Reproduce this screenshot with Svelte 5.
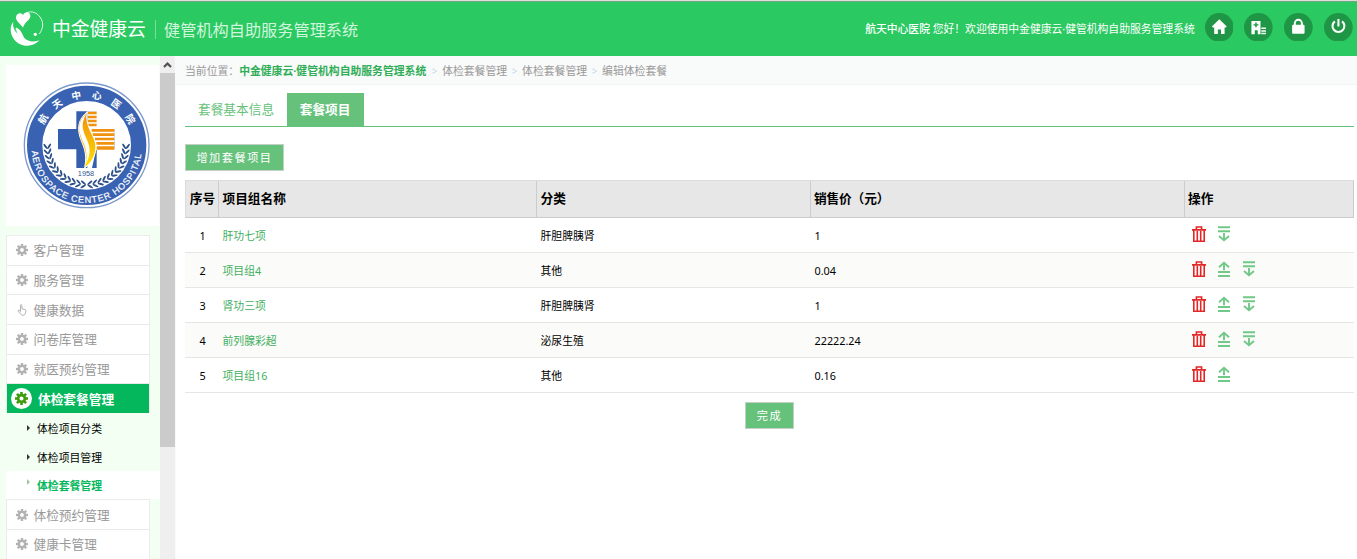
<script>
  const menu = ['客户管理', '服务管理', '健康数据', '问卷库管理', '就医预约管理'];
  const subs = ['体检项目分类', '体检项目管理', '体检套餐管理'];
  const more = ['体检预约管理', '健康卡管理'];
  const rows = [
    ['肝功七项', '肝胆脾胰肾', '1'],
    ['项目组4', '其他', '0.04'],
    ['肾功三项', '肝胆脾胰肾', '1'],
    ['前列腺彩超', '泌尿生殖', '22222.24'],
    ['项目组16', '其他', '0.16']
  ];
  const ring = [...'航天中心医院'].map((c, i) => ({ c, a: -59 + i * 23.6 }));
  const teeth = [0, 45, 90, 135, 180, 225, 270, 315];
  const leaves = Array.from({ length: 12 }, (_, i) => {
    const t = ((178 - i * 7.6) * Math.PI) / 180;
    return { x: 118 * Math.cos(t), y: 118 * Math.sin(t), r: 88 - i * 7.6 };
  });
</script>

{#snippet gear()}
  <svg class="ico" viewBox="0 0 12 12">
    {#each teeth as a}
      <rect x="4.8" y="0" width="2.4" height="3" transform="rotate({a} 6 6)" fill="currentColor" />
    {/each}
    <circle cx="6" cy="6" r="3.1" fill="none" stroke="currentColor" stroke-width="2.4" />
  </svg>
{/snippet}

{#snippet hand()}
  <svg class="ico" viewBox="0 0 12 12" fill="none" stroke="currentColor" stroke-width="1">
    <path d="M4.5 7.5V1.4q0-.8.7-.8t.7.8v3.4l3.2.8q1 .3.8 1.4l-.6 2.6q-.4 1.6-2 1.6H5.8L2.2 7.3q-.5-1.1.5-1.2z" />
  </svg>
{/snippet}

<div class="page">
  <header>
    <svg class="brand" viewBox="0 0 102 108">
      <path d="M39 50C32 38 17 32 18 18 20 6 33 3 39 12 44 2 57 1 61 12c3 14-17 19-22 38z" fill="#fff" />
      <path d="M50 5C66-1 80 5 90 18c11 15 11 32-2 51" fill="none" stroke="#fff" stroke-width="2.6" />
      <circle cx="76" cy="70" r="5" fill="#fff" />
      <path d="M10 32C-1 46 0 65 9 80c10 19 33 27 53 23 12-3 20-8 27-16-18 8-36 4-46-6l-8-16c-5-9-8-10-14-14-3-2-5 1-4 4l6 13C13 60 7 48 10 32z" fill="#fff" />
    </svg>
    <span class="name">中金健康云</span>
    <i class="bar"></i>
    <span class="sys">健管机构自助服务管理系统</span>
    <span class="hello"><b>航天中心医院</b> 您好！欢迎使用中金健康云·健管机构自助服务管理系统</span>
    <nav>
      <svg viewBox="0 0 29 29"><circle cx="14.5" cy="14.5" r="14.5" /><path d="M14.5 6.3L22 13.6l-1 1.1h-1.2v6.6h-3.6v-4.6h-3.2v4.6H9.3v-6.6H8l-1-1.1z" fill="#fff" /></svg>
      <svg viewBox="0 0 29 29"><circle cx="14.5" cy="14.5" r="14.5" /><path d="M7.5 8h9.2v13.5h-2.8v-4h-3v4H7.5z" fill="#fff" /><path d="M12.1 9.5v5M9.6 12h5" stroke="#1f9645" stroke-width="1.5" /><path d="M17.5 15.5h4.7M17.5 18.2h4.7M17.5 20.8h4.7" stroke="#fff" stroke-width="1.5" /></svg>
      <svg viewBox="0 0 29 29"><circle cx="14.5" cy="14.5" r="14.5" /><path d="M10.9 12.5v-2a3.6 3.6 0 017.2 0v2" fill="none" stroke="#fff" stroke-width="2" /><rect x="8.2" y="12" width="12.6" height="9" rx="1" fill="#fff" /></svg>
      <svg viewBox="0 0 29 29"><circle cx="14.5" cy="14.5" r="14.5" /><path d="M11 8.4a6 6 0 107.2 0M14.6 6v7.7" fill="none" stroke="#fff" stroke-width="2.1" /></svg>
    </nav>
  </header>

  <div class="body">
    <aside>
      <div class="logo">
        <svg viewBox="18 27 459 483">
          <defs>
            <path id="arc" d="M95 276A165 165 0 0 0 425 276" />
            <linearGradient id="flame" x1="0" y1="0" x2="0" y2="1"><stop offset="0" stop-color="#f08a08" /><stop offset="1" stop-color="#ffe300" /></linearGradient>
          </defs>
          <circle cx="260" cy="268" r="187" fill="#fff" stroke="#7c99cc" stroke-width="4" />
          <circle cx="260" cy="268" r="156" fill="none" stroke="#3963b2" stroke-width="46" />
          <g fill="#fff" font-size="29" font-weight="700" text-anchor="middle">
            {#each ring as { c, a }}
              <text x="260" y="126" transform="rotate({a} 260 268)">{c}</text>
            {/each}
          </g>
          <text class="latin" fill="#fff" stroke="#fff" stroke-width=".6" font-size="27"><textPath href="#arc" startOffset="9" textLength="490" lengthAdjust="spacing">AEROSPACE CENTER HOSPITAL</textPath></text>
          <path d="M229 166h61v53h54v61h-54v56h-61v-56h-55v-61h55z" fill="#355fae" />
          <path d="M262 166h30v53h52v63h-56l-12 54h-14z" fill="#fff" />
          <g fill="#f0920e">
            <path d="M263 167h27v8h-27zM263 179h27v8h-27zM263 191h27v8h-27zM263 203h27v8h-27zM275 219h68v8h-68zM277 232h66v8h-66zM285 245h58v8h-58zM289 258h54v8h-54zM290 271h53v10h-53z" />
          </g>
          <path d="M262 167c-27 23-30 47-23 73 8 29 25 45 15 96 29-22 39-54 31-81-11-29-31-53-23-88z" fill="url(#flame)" stroke="#fff" stroke-width="3" />
          <path d="M260 171c-25 24-26 48-18 68 9 27 22 39 17 84 13-28 12-49 3-69-14-33-22-46-2-83z" fill="#fff" />
          <text class="latin" x="258" y="360" font-size="22" text-anchor="middle" fill="#35568d">1958</text>
          {#each [1, -1] as s}
            <g transform="translate(260 268) scale({s} 1)" fill="#2c5087">
              {#each leaves as l}
                <g transform="translate({l.x} {l.y}) rotate({l.r})">
                  <ellipse cx="-4" cy="-4" rx="9.5" ry="3" transform="rotate(35)" />
                  <ellipse cx="-4" cy="4" rx="9.5" ry="3" transform="rotate(-35)" />
                </g>
              {/each}
            </g>
          {/each}
        </svg>
      </div>
      <ul class="menu">
        {#each menu as m, i}
          <li>{#if i === 2}{@render hand()}{:else}{@render gear()}{/if}<span>{m}</span></li>
        {/each}
        <li class="active"><em>{@render gear()}</em><span>体检套餐管理</span></li>
      </ul>
      <ul class="subs">
        {#each subs as s, i}<li class:on={i === 2}><i></i>{s}</li>{/each}
      </ul>
      <ul class="menu second">
        {#each more as m}<li>{@render gear()}<span>{m}</span></li>{/each}
      </ul>
    </aside>

    <div class="scroll">
      <svg viewBox="0 0 15 17"><path d="M4 11l3.5-3.5L11 11" fill="none" stroke="#505050" stroke-width="2.2" /></svg>
      <div class="thumb"></div>
    </div>

    <main>
      <div class="crumbs">
        <span>当前位置：</span><b>中金健康云·健管机构自助服务管理系统</b><i>&gt;</i><span>体检套餐管理</span><i>&gt;</i><span>体检套餐管理</span><i>&gt;</i><span>编辑体检套餐</span>
      </div>
      <div class="tabs"><span>套餐基本信息</span><span class="cur">套餐项目</span></div>
      <button class="add">增加套餐项目</button>
      <div class="table">
        <div class="row head"><span>序号</span><span>项目组名称</span><span>分类</span><span>销售价（元）</span><span>操作</span></div>
        {#each rows as r, i}
          <div class="row" class:alt={i % 2 === 1}>
            <span>{i + 1}</span><span class="link">{r[0]}</span><span>{r[1]}</span><span>{r[2]}</span>
            <span class="ops">
              <svg viewBox="0 0 14 17" fill="none" stroke="#e32626" stroke-width="1.6"><path d="M0 3.9h14M4.4 3.5V1h5.2v2.5M1.8 3.5v11.8h10.4V3.5M5.3 5v9.8M8.7 5v9.8" /></svg>
              {#if i > 0}
                <svg viewBox="0 0 14 17" fill="none" stroke="#72c887" stroke-width="1.9"><path d="M2 6.3L7 1.8l5 4.5M7 2v7.3M1 11h12M1 15h12" /></svg>
              {/if}
              {#if i < 4}
                <svg viewBox="0 0 14 17" fill="none" stroke="#72c887" stroke-width="1.9"><path d="M1 1.2h12M1 5.2h12M7 7v7.5M2 10l5 4.3 5-4.3" /></svg>
              {/if}
            </span>
          </div>
        {/each}
      </div>
      <button class="done">完成</button>
    </main>
  </div>
</div>

<style>
  :global(body) { margin: 0; background: #fff; }
  * { box-sizing: border-box; }
  .page { height: 559px; overflow: hidden; display: flex; flex-direction: column; font-family: "Noto Sans", "Noto Sans CJK SC", sans-serif; font-size: 10.83px; line-height: 16px; color: #000; white-space: nowrap; }
  svg { display: block; flex: none; }
  ul { margin: 0; padding: 0; list-style: none; }
  header { height: 56px; flex: none; background: #2ac961; border-top: 1px solid #ddd; box-shadow: inset 0 1px #70a980; display: flex; align-items: center; color: #fff; padding: 0 4.5px 0 10px; }
  .brand { width: 34px; height: 36px; margin-top: 1px; }
  .name { font-size: 18.8px; line-height: 28px; margin-left: 8px; width: 94px; margin-top: 1px; }
  .bar { width: 1px; height: 19px; background: #7bde9d; margin: 1px 8px 0 9px; }
  .sys { font-size: 16.2px; line-height: 24px; color: #d2f5de; margin-top: 3px; }
  .hello { margin-left: auto; margin-right: 10px; letter-spacing: -0.03px; }
  .hello b { font-weight: 500; }
  nav { display: flex; gap: 11px; margin-top: -3px; }
  nav svg { width: 28.7px; height: 28.7px; fill: #1f9645; }
  .body { flex: 1; min-height: 0; display: flex; }
  aside { width: 160px; background: #f3fff3; flex: none; overflow: hidden; padding: 9px 0 0 6px; }
  .logo { width: 153px; height: 161px; background: #fff; }
  .logo svg { width: 153px; height: 161px; }
  .latin { font-family: "Liberation Sans", sans-serif; }
  .menu { width: 144px; margin-top: 9px; border: 1px solid #ececec; border-bottom: 0; font-size: 12.7px; color: #999; }
  .menu li { height: 29.7px; background: #fff; border-bottom: 1px solid #e9e9e9; display: flex; align-items: center; padding-left: 8.5px; }
  .menu li span { margin-left: 6px; }
  .ico { width: 12px; height: 12px; color: #b2b2b2; }
  .menu .active { height: 29px; background: #04b75c; color: #fff; font-weight: 700; padding-left: 4px; border: 0; }
  .active em { width: 21px; height: 21px; border-radius: 50%; background: #fff; display: grid; place-items: center; }
  .active .ico { color: #3f9c0c; width: 13px; height: 13px; }
  .subs li { height: 29px; display: flex; align-items: center; padding: 2px 0 0 21px; }
  .subs i { border-left: 3px solid #333; border-top: 3px solid transparent; border-bottom: 3px solid transparent; margin-right: 7px; margin-top: -2px; }
  .subs .on { background: #fff; color: #04b75c; font-weight: 700; height: 28px; padding-top: 2px; }
  .subs .on i { border-left-color: #9cc99c; margin-top: -8px; }
  .second { margin-top: 0; }
  .scroll { width: 16px; background: #efefef; border-right: 1px solid #fafafa; flex: none; }
  .scroll svg { width: 15px; height: 17px; }
  .thumb { height: 374px; width: 15px; background: #cbcbcb; }
  main { flex: 1; display: flex; flex-direction: column; align-items: flex-start; }
  .crumbs { width: 100%; height: 29px; flex: none; background: #f9fafa; border-bottom: 1px solid #f0f4f4; display: flex; align-items: center; padding: 1px 0 0 9px; color: #999; }
  .crumbs b { color: #2fae57; width: 188px; }
  .crumbs i { width: 15px; text-align: center; font-style: normal; color: #c5dbea; font-size: 10px; }
  .tabs { width: 1169px; height: 34px; margin: 8px 0 0 9px; border-bottom: 1px solid #66c17b; display: flex; font-size: 12.7px; line-height: 33px; color: #66c17b; padding-left: 13px; }
  .tabs .cur { margin-left: 12.5px; background: #66c17b; color: #fff; font-weight: 700; width: 77px; text-align: center; }
  button { font: inherit; color: #fff; background: #66c17b; border: 1px solid #c4cfc7; padding: 0; letter-spacing: 1.5px; height: 27px; font-size: 11.2px; text-indent: 0; }
  .add { width: 99px; margin: 17px 0 0 9px; }
  .done { width: 49px; margin: 9px 0 0 569px; }
  .table { width: 1169px; margin: 9px 0 0 9px; }
  .row { display: grid; grid-template-columns: 34px 318px 274px 374px 169px; height: 35px; border-bottom: 1px solid #e6e6e6; align-items: center; }
  .row > span { padding: 2px 0 0 3.5px; }
  .row > span:first-child { text-align: center; padding: 2px 0 0 1px; }
  .alt { background: #fbfbf9; }
  .head { height: 38px; background: #e7e7e7; border: 1px solid #ccc; border-top-color: #dcdcdc; border-left-color: #dcdcdc; grid-template-columns: 33px 318px 274px 374px 168px; font-size: 12.7px; font-weight: 700; }
  .row.head > span { height: 36px; line-height: 35px; padding-top: 0; border-right: 1px solid #ccc; }
  .row.head > span:last-child { border: 0; padding-left: 3px; }
  .row.head > span:nth-child(4) { padding-left: 3px; letter-spacing: -0.15px; }
  .link { color: #42b05e; }
  .row > .ops { display: flex; gap: 11px; padding: 0 0 0 7px; margin-top: -1px; }
  .ops svg { width: 14px; height: 17px; }
</style>
